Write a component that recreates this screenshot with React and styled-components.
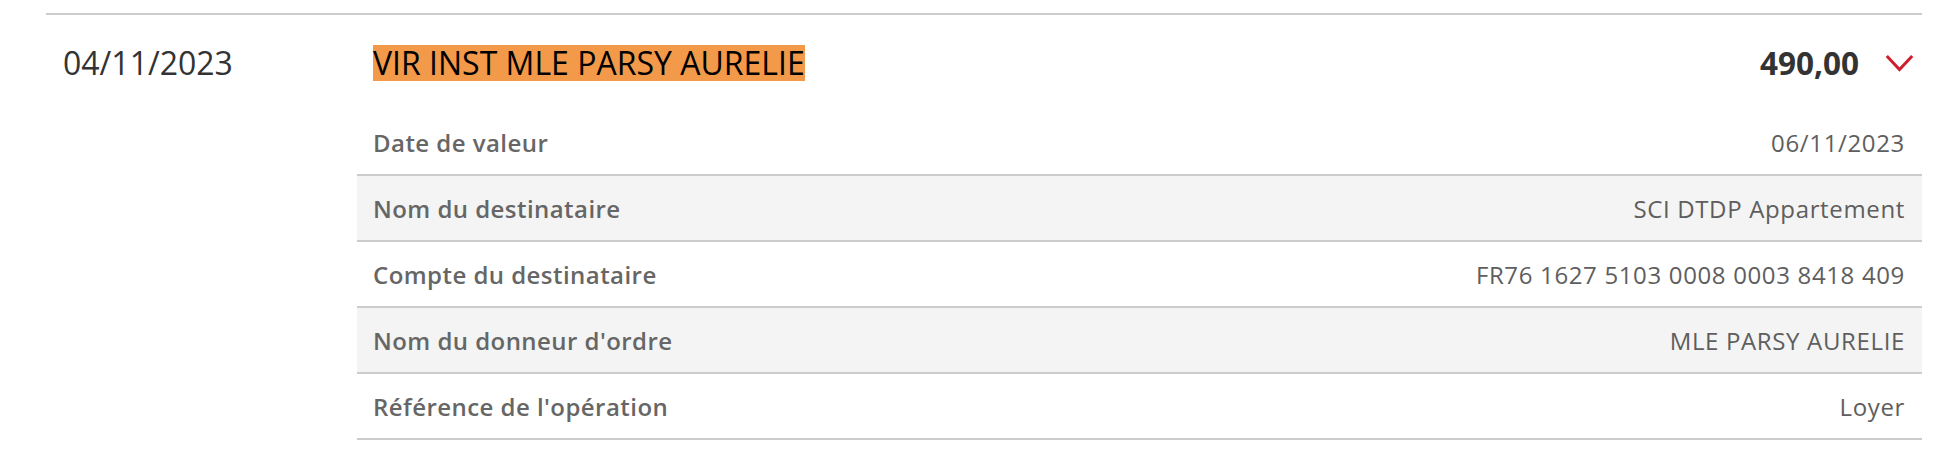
import React from "react";
import styled, { createGlobalStyle } from "styled-components";

const GlobalStyle = createGlobalStyle`
  html, body { margin: 0; padding: 0; background: #ffffff; }
  body { font-family: "Open Sans", "Noto Sans", sans-serif; }
`;

const Page = styled.div`
  padding: 13px 22px 0 46px;
`;

const Operation = styled.section`
  display: grid;
  grid-template-columns: 311px 1fr;
  border-top: 2px solid #cccccc;
`;

const DateCell = styled.div`
  height: 95px;
  display: flex;
  align-items: center;
  padding-left: 17px;
  font-size: 32px;
  color: #333333;
`;

const Details = styled.div`
  display: flex;
  flex-direction: column;
`;

const Header = styled.div`
  height: 95px;
  display: flex;
  align-items: center;
  padding: 0 8px 0 16px;
`;

const Title = styled.span`
  font-size: 32px;
  color: #000000;
  background: #f29a4a;
  line-height: 36px;
  flex: 0 0 auto;
`;

const Amount = styled.span`
  margin-left: auto;
  font-size: 31.5px;
  font-weight: 700;
  color: #333333;
`;

const Toggle = styled.button`
  border: 0;
  background: none;
  padding: 0;
  margin-left: 26px;
  width: 29px;
  height: 18px;
  display: flex;
  cursor: pointer;
`;

const Row = styled.div`
  height: 64px;
  display: flex;
  align-items: center;
  justify-content: space-between;
  padding: 0 17px 0 16px;
  border-bottom: 2px solid #cccccc;
  background: ${(p) => (p.$shaded ? "#f4f4f4" : "#ffffff")};
  font-size: 24px;
`;

const Label = styled.span`
  font-weight: 600;
  letter-spacing: 0.45px;
  color: #666666;
`;

const Value = styled.span`
  letter-spacing: 0.65px;
  color: #5e5e5e;
`;

const rows = [
  ["Date de valeur", "06/11/2023"],
  ["Nom du destinataire", "SCI DTDP Appartement"],
  ["Compte du destinataire", "FR76 1627 5103 0008 0003 8418 409"],
  ["Nom du donneur d'ordre", "MLE PARSY AURELIE"],
  ["Référence de l'opération", "Loyer"],
];

export default function App() {
  return (
    <>
      <GlobalStyle />
      <Page>
        <Operation>
          <DateCell>04/11/2023</DateCell>
          <Details>
            <Header>
              <Title>VIR INST MLE PARSY AURELIE</Title>
              <Amount>490,00</Amount>
              <Toggle aria-label="Replier">
                <svg width="29" height="18" viewBox="0 0 29 18">
                  <polyline
                    points="1.8,2 14.5,15.6 27.2,2"
                    fill="none"
                    stroke="#cf1f2e"
                    strokeWidth="3"
                  />
                </svg>
              </Toggle>
            </Header>
            {rows.map(([label, value], i) => (
              <Row key={label} $shaded={i % 2 === 1}>
                <Label>{label}</Label>
                <Value>{value}</Value>
              </Row>
            ))}
          </Details>
        </Operation>
      </Page>
    </>
  );
}
